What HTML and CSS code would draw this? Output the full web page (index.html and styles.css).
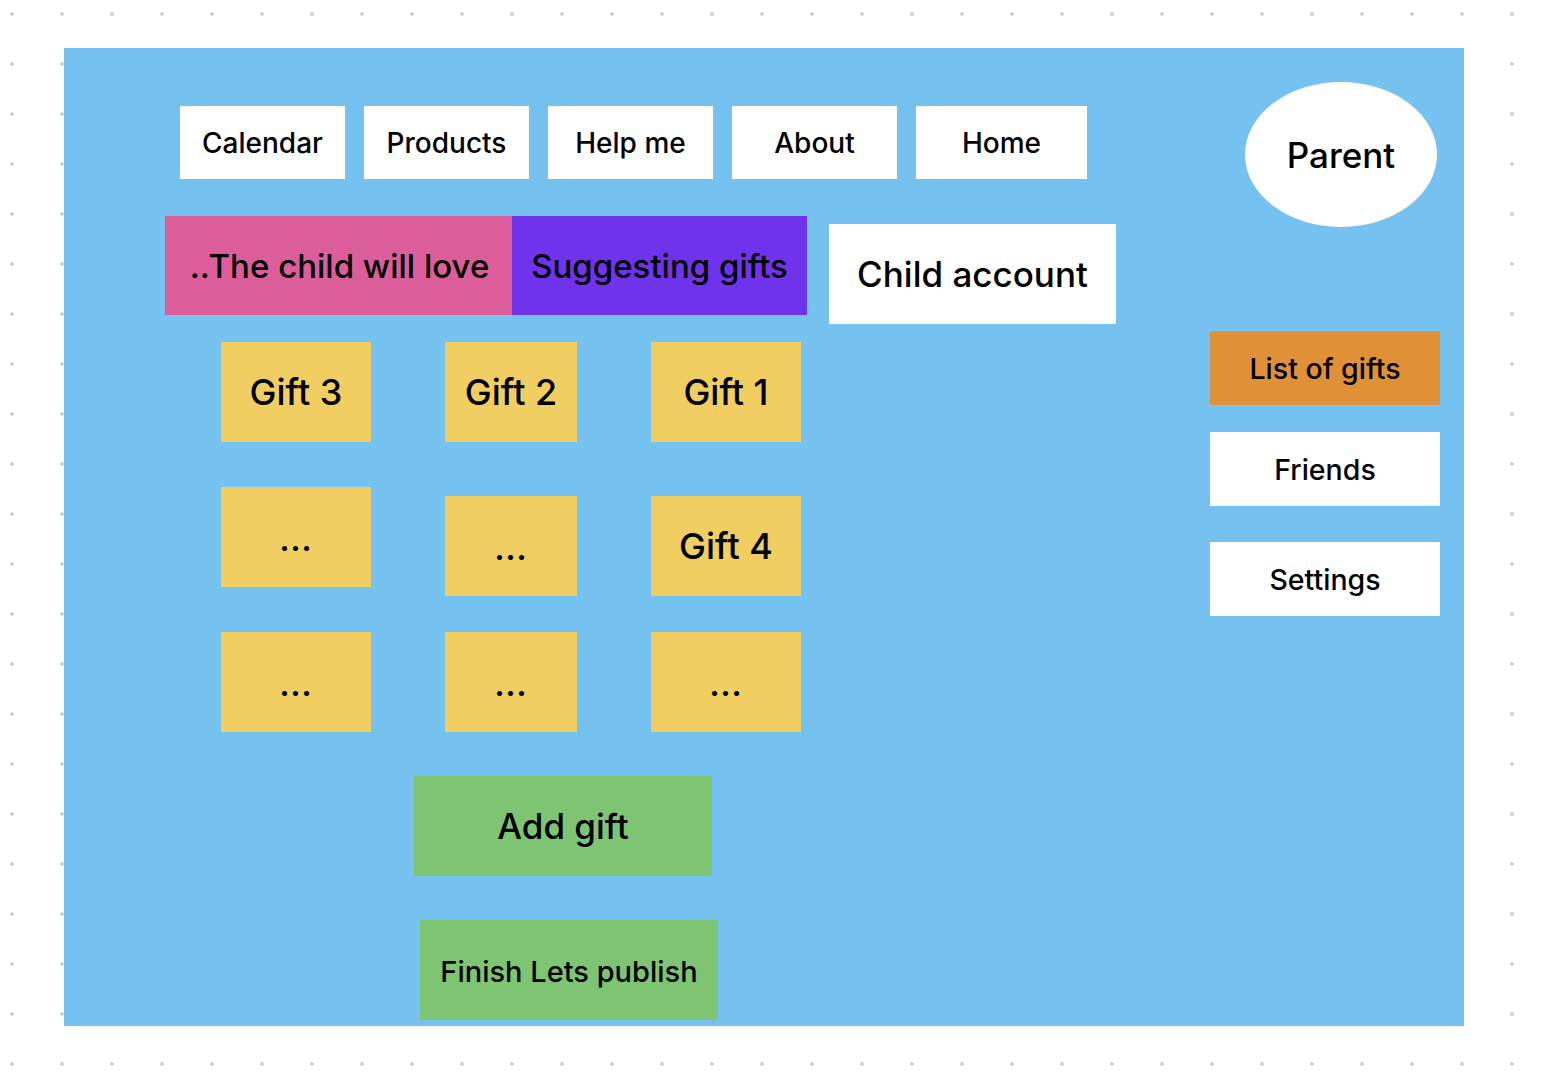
FILE: index.html
```html
<!DOCTYPE html>
<html lang="en">
<head>
<meta charset="utf-8">
<title>Gift board</title>
<link rel="stylesheet" href="styles.css">
</head>
<body>
<main class="frame">
  <nav class="nav">
    <div class="nav-btn">Calendar</div>
    <div class="nav-btn">Products</div>
    <div class="nav-btn">Help me</div>
    <div class="nav-btn">About</div>
    <div class="nav-btn nav-wide">Home</div>
  </nav>

  <div class="parent">Parent</div>

  <div class="tabs">
    <div class="tab tab-pink">..The child will love</div>
    <div class="tab tab-purple">Suggesting gifts</div>
  </div>

  <div class="child">Child account</div>

  <section class="gifts">
    <div class="gift-col">
      <div class="gift">Gift 3</div>
      <div class="gift dots">...</div>
      <div class="gift dots">...</div>
    </div>
    <div class="gift-col col-narrow">
      <div class="gift">Gift 2</div>
      <div class="gift dots shifted">...</div>
      <div class="gift dots">...</div>
    </div>
    <div class="gift-col">
      <div class="gift">Gift 1</div>
      <div class="gift shifted">Gift 4</div>
      <div class="gift dots">...</div>
    </div>
  </section>

  <aside class="side">
    <div class="side-btn side-orange">List of gifts</div>
    <div class="side-btn side-friends">Friends</div>
    <div class="side-btn side-settings">Settings</div>
  </aside>

  <div class="actions">
    <div class="action add">Add gift</div>
    <div class="action finish">Finish Lets publish</div>
  </div>
</main>
</body>
</html>
```
FILE: styles.css
```css
html, body {
  margin: 0;
  padding: 0;
}
body {
  width: 1544px;
  height: 1082px;
  overflow: hidden;
  background-color: #ffffff;
  background-image: radial-gradient(circle, #c6c6c6 1.4px, transparent 1.9px);
  background-size: 50px 50px;
  background-position: 37px 39px;
  font-family: Inter, "Noto Sans", "Liberation Sans", sans-serif;
  color: #000;
}
.frame {
  position: relative;
  margin: 48px 0 0 64px;
  width: 1400px;
  height: 978px;
  background: #75c2f0;
}
.nav {
  position: absolute;
  left: 116px;
  top: 58px;
  display: flex;
  gap: 19px;
}
.nav-btn {
  width: 165px;
  height: 73px;
  background: #fff;
  display: flex;
  align-items: center;
  justify-content: center;
  font-size: 28px;
  font-weight: 500;
}
.nav-wide { width: 171px; }

.parent {
  position: absolute;
  left: 1181px;
  top: 34px;
  width: 192px;
  height: 145px;
  border-radius: 50%;
  background: #fff;
  display: flex;
  align-items: center;
  justify-content: center;
  font-size: 35px;
  font-weight: 500;
}

.tabs {
  position: absolute;
  left: 101px;
  top: 168px;
  display: flex;
}
.tab {
  height: 99px;
  display: flex;
  align-items: center;
  justify-content: center;
  font-size: 33px;
  font-weight: 500;
}
.tab-pink { width: 347px; background: #db5e9b; padding-left: 2px; box-sizing: border-box; }
.tab-purple { width: 295px; background: #7033ec; }

.child {
  position: absolute;
  left: 765px;
  top: 176px;
  width: 287px;
  height: 100px;
  background: #fff;
  display: flex;
  align-items: center;
  justify-content: center;
  font-size: 35px;
  font-weight: 500;
}

.gifts {
  position: absolute;
  left: 157px;
  top: 294px;
  display: flex;
  gap: 74px;
}
.gift-col {
  display: flex;
  flex-direction: column;
  gap: 45px;
  width: 150px;
}
.col-narrow { width: 132px; }
.gift {
  height: 100px;
  background: #f0ce62;
  display: flex;
  align-items: center;
  justify-content: center;
  font-size: 36px;
  font-weight: 500;
}
.gift.shifted {
  margin-top: 9px;
  margin-bottom: -9px;
}
.dots {
  font-size: 30px;
  font-weight: 700;
  letter-spacing: 1px;
  padding-top: 5px;
  box-sizing: border-box;
}

.side {
  position: absolute;
  left: 1146px;
  top: 283px;
  display: flex;
  flex-direction: column;
  width: 230px;
}
.side-btn {
  height: 74px;
  background: #fff;
  display: flex;
  align-items: center;
  justify-content: center;
  font-size: 28.5px;
  font-weight: 500;
}
.side-orange { background: #e09036; }
.side-friends { margin-top: 27px; }
.side-settings { margin-top: 36px; }

.actions {
  position: absolute;
  left: 350px;
  top: 728px;
  display: flex;
  flex-direction: column;
  gap: 44px;
}
.action {
  width: 298px;
  height: 100px;
  background: #7dc473;
  display: flex;
  align-items: center;
  justify-content: center;
  font-weight: 500;
}
.add { font-size: 35px; }
.finish { font-size: 29px; margin-left: 6px; padding-top: 2px; box-sizing: border-box; }
```
